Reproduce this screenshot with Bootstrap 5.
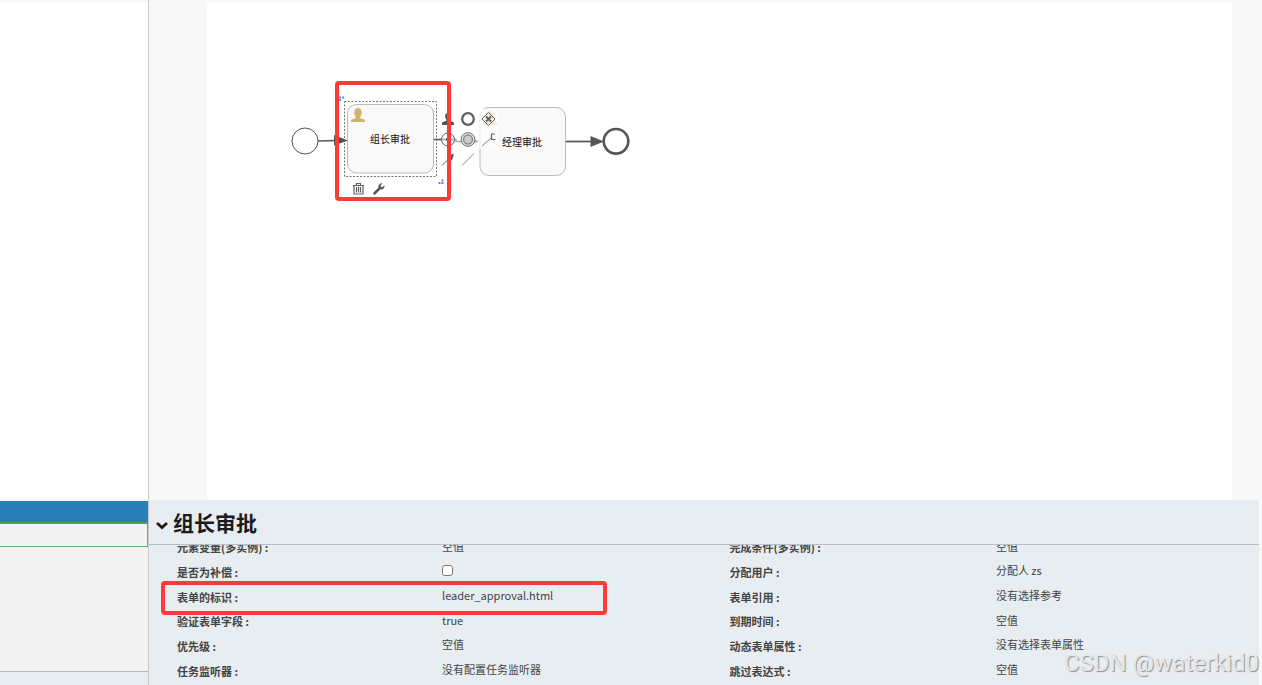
<!DOCTYPE html>
<html lang="zh-CN">
<head>
<meta charset="utf-8">
<meta name="viewport" content="width=device-width, initial-scale=1">
<title>流程设计器</title>
<link href="https://cdn.jsdelivr.net/npm/bootstrap@5.3.0/dist/css/bootstrap.min.css" rel="stylesheet">
<style>
body{font-family:"Noto Sans CJK SC",sans-serif;background:#f8f8f8;color:#444}
.side{width:149px;border-right:1px solid #c8c8c8;padding-top:2px}
.dock{height:185px}
.side-title{height:21px;margin-top:1px;background:#2980b9}
.side-row{height:25px;background:#f3f3f3;border:1px solid #5cb85c;border-top:2px solid #4fa04f;border-left:0}
.side-body{background:#f2f2f2}
.side-foot{height:14px;background:#e8edf1;border-top:1px solid #b4bac3}
.canvas-wrap{padding:2px 30px 0 58px}
.canvas{padding:68px 0 0 73px}
.flow-box{width:360px;height:140px}
.flow-box text{font-size:10px;fill:#111}
.quick{left:158px;top:39px;display:grid;grid-template-columns:repeat(3,20px);grid-auto-rows:20px}
.quick-edit{left:69px;top:109px;display:grid;grid-template-columns:repeat(2,20px)}
.tool{width:20px;height:20px;padding:0;border:0;background:transparent;display:block}
.tool.veil{background:rgba(255,255,255,.7)}
.tool svg{display:block;width:20px;height:20px;fill:none;stroke:#606060}
.outline{border:4px solid #fc3a38;border-radius:4px;pointer-events:none}
.outline-task{left:55px;top:11px;width:116px;height:120px}
.outline-form{left:12px;top:81px;width:446px;height:34px}
.props{background:#e8edf1;margin-right:3px}
.props-head{height:45px;border-bottom:1px solid #b8bdcb;padding-left:7px}
.props-head h1{font-size:21px;line-height:44px;color:#1c1c1c}
.toggle{width:12px;height:12px;padding:0;border:0;background:none;margin-right:5px;margin-top:6px}
.toggle svg{display:block;width:12px;height:12px}
.fields{width:100%;table-layout:fixed;height:148px;margin-top:-10px;font-size:11px;line-height:16px}
.fields th,.fields td{padding:0;vertical-align:middle;white-space:nowrap}
.fields td{padding-bottom:3px}
.fields th:first-child{padding-left:28px}
.fields input{width:11px;height:11px;margin:0;display:block;border:1px solid #777;border-radius:2px;float:none}
.c1{width:26.4%}.c2{width:25.9%}.c3{width:24%}
.stamp{right:3px;bottom:4px;font:24px/36px Roboto,sans-serif;color:#e5e7e9;text-shadow:1px 1px 1px #8b8e92}
</style>
<script src="https://cdn.jsdelivr.net/npm/bootstrap@5.3.0/dist/js/bootstrap.bundle.min.js"></script>
</head>
<body>
<div class="d-flex vh-100 overflow-hidden position-relative">
  <aside class="side d-flex flex-column flex-shrink-0">
    <div class="flex-grow-1 bg-white"></div>
    <div class="dock d-flex flex-column">
      <div class="side-title"></div>
      <div class="side-row"></div>
      <div class="side-body flex-grow-1"></div>
      <div class="side-foot"></div>
    </div>
  </aside>
  <main class="d-flex flex-column flex-grow-1 overflow-hidden">
    <div class="canvas-wrap flex-grow-1 d-flex">
      <div class="canvas bg-white flex-grow-1">
        <div class="flow-box position-relative">
          <svg width="360" height="140" viewBox="280 70 360 140" role="img" aria-label="流程图">
            <circle cx="305" cy="141" r="13" fill="#fff" stroke="#555"/>
            <path d="M318 141L336 140.500" stroke="#555" stroke-width="1.700"/>
            <path d="M433 139.500H456V141.500H470" fill="none" stroke="#aaa" stroke-width="1.500"/>
            <path d="M433 139.500H441" stroke="#555" stroke-width="1.500"/>
            <path d="M468 137.500L481 141.500L468 145Z" fill="#bbb"/>
            <rect x="480" y="107.500" width="85.500" height="68" rx="9" fill="#f9f9f9" stroke="#bbb"/>
            <path d="M483 125v-1.500c0-1.500 5-1.500 5-3-3-4-2-9.500 2-9.500s5 5.500 2 9.500c0 1.500 5 1.500 5 3v1.500z" fill="#d0b36c"/>
            <text x="502" y="146">经理审批</text>
            <path d="M566 141.500H592" stroke="#555" stroke-width="1.700"/>
            <path d="M590.500 136L604 141.500L590.500 147Z" fill="#555"/>
            <circle cx="616" cy="141.300" r="12.300" fill="#fff" stroke="#555" stroke-width="2.600"/>
            <rect x="347.500" y="104.500" width="86" height="68.500" rx="9" fill="#f9f9f9" stroke="#bbb"/>
            <rect x="344.500" y="101.500" width="92" height="75" fill="none" stroke="#777" stroke-dasharray="2 1.500"/>
            <path d="M334 135L348 140.500L334 145.500Z" fill="#555"/>
            <path d="M351 122v-1.500c0-1.500 5-1.500 5-3-3-4-2-9.500 2-9.500s5 5.500 2 9.500c0 1.500 5 1.500 5 3v1.500z" fill="#d0b36c"/>
            <text x="370" y="143">组长审批</text>
            <path d="M339 97.500h2m1 0h2M339 100h2M441.500 180.500h2M438.500 183h2m1 0h2" stroke="#5a8bd6" stroke-width="1.800"/>
          </svg>
          <div class="quick position-absolute">
            <button class="tool" aria-label="用户任务"><svg viewBox="0 0 20 20"><path fill="#555" stroke="none" d="M4 16v-2c0-1.500 4.500-1.500 4.500-3-2-3-2-7 1.500-7s3.500 4 1.500 7c0 1.500 4.500 1.500 4.500 3v2z"/></svg></button>
            <button class="tool" aria-label="结束事件"><svg viewBox="0 0 20 20"><circle cx="10" cy="10" r="5.800" stroke-width="2.300"/></svg></button>
            <button class="tool veil" aria-label="排他网关"><svg viewBox="0 0 20 20"><path d="M10.500 3.500L17 10L10.500 16.500L4 10Z"/><path stroke-width="1.800" d="M8 7.500l5 5m0-5l-5 5"/></svg></button>
            <button class="tool" aria-label="中间事件"><svg viewBox="0 0 20 20"><circle cx="10" cy="10.500" r="6.500"/><circle cx="10" cy="10.500" r="2" fill="#555" stroke="none"/></svg></button>
            <button class="tool" aria-label="边界事件"><svg viewBox="0 0 20 20"><circle cx="10" cy="10.500" r="6.800" fill="#f2f2f2"/><circle cx="10" cy="10.500" r="4.500" fill="#ccc" stroke="#888" stroke-width="1.400"/></svg></button>
            <button class="tool veil" aria-label="文本注释"><svg viewBox="0 0 20 20"><path stroke="#888" d="M4 17l9-8"/><path d="M17 5h-3.500v5.500h4" stroke-width="1.200"/></svg></button>
            <button class="tool" aria-label="顺序流"><svg viewBox="0 0 20 20"><path d="M4 16.500l9-9"/><path fill="#555" stroke="none" d="M16 4.500l-2 7-5-4z"/></svg></button>
            <button class="tool" aria-label="关联"><svg viewBox="0 0 20 20"><path stroke="#888" d="M4 16.500l12-12"/></svg></button>
          </div>
          <div class="quick-edit position-absolute">
            <button class="tool" aria-label="删除"><svg viewBox="0 0 20 20"><path d="M4 6.500h11M7.500 6V4.500h4V6M5 7v8h9V7M7.500 8v5.500m2-5.500v5.500m2-5.500v5.500" stroke-width="1.200"/></svg></button>
            <button class="tool" aria-label="更改类型"><svg viewBox="0 0 20 20"><path fill="#555" stroke="none" d="M4.500 13.500l5-5c-.5-2.500 1.500-4.500 4-4.200l-2 2 .5 1.500 1.500.4 2-2c.5 2.800-1.800 4.600-4 4.100l-5 5c-1.300 1-3-.5-2-1.800z"/></svg></button>
          </div>
          <div class="outline outline-task position-absolute"></div>
        </div>
      </div>
    </div>
    <section class="props dock position-relative overflow-hidden flex-shrink-0">
      <div class="overflow-hidden h-100">
        <header class="props-head d-flex align-items-center">
          <button class="toggle" aria-label="折叠"><svg viewBox="0 0 12 12"><path d="M1 4l5 4.500L11 4" fill="none" stroke="#1c1c1c" stroke-width="2.800"/></svg></button>
          <h1 class="fw-bold m-0">组长审批</h1>
        </header>
        <div class="overflow-hidden">
        <table class="fields">
          <colgroup><col class="c1"><col class="c2"><col class="c3"><col></colgroup>
          <tbody>
          <tr><th>元素变量(多实例) :</th><td>空值</td><th>完成条件(多实例) :</th><td>空值</td></tr>
          <tr><th><label for="comp">是否为补偿 :</label></th><td><input class="form-check-input" type="checkbox" id="comp"></td><th>分配用户 :</th><td>分配人 zs</td></tr>
          <tr><th>表单的标识 :</th><td>leader_approval.html</td><th>表单引用 :</th><td>没有选择参考</td></tr>
          <tr><th>验证表单字段 :</th><td>true</td><th>到期时间 :</th><td>空值</td></tr>
          <tr><th>优先级 :</th><td>空值</td><th>动态表单属性 :</th><td>没有选择表单属性</td></tr>
          <tr><th>任务监听器 :</th><td>没有配置任务监听器</td><th>跳过表达式 :</th><td>空值</td></tr>
          </tbody>
        </table>
        </div>
      </div>
      <div class="outline outline-form position-absolute"></div>
    </section>
  </main>
  <div class="stamp position-absolute">CSDN @waterkid0</div>
</div>
</body>
</html>
